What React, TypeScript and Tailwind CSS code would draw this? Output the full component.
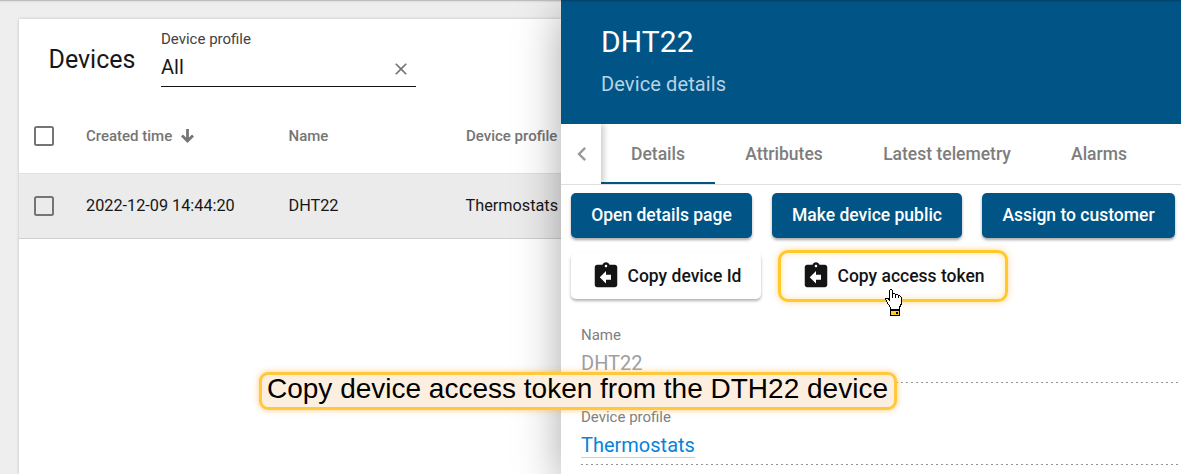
import type { ReactNode } from "react";
import { MdAssignmentReturn, MdChevronLeft, MdClose } from "react-icons/md";

const roboto = "font-['Roboto',sans-serif]";

function Checkbox() {
  return <span className="block size-5 rounded-[2.5px] border-2 border-[#757575]" />;
}

function SortArrow() {
  return (
    <svg width="13" height="14" viewBox="0 0 13 14" fill="none" stroke="#757575" strokeWidth="2.8">
      <path d="M6.5 0V12M1 6.6L6.5 12L12 6.6" />
    </svg>
  );
}

function PrimaryButton({ children, className }: { children: ReactNode; className: string }) {
  return (
    <button
      className={`flex h-[45px] shrink-0 items-center justify-center rounded-[5px] bg-[#005586] pb-px text-[17.5px] font-medium whitespace-nowrap text-white shadow-[0_2px_3px_rgba(0,0,0,0.35)] ${className}`}
    >
      {children}
    </button>
  );
}

function Tab({ children, className, active }: { children: ReactNode; className: string; active?: boolean }) {
  return (
    <div
      className={`flex h-[60px] shrink-0 items-center justify-center border-b-2 pt-[2px] text-[17.5px] font-medium whitespace-nowrap text-[#7d7d7d] ${active ? "border-[#005586]" : "border-transparent"} ${className}`}
    >
      {children}
    </div>
  );
}

function DevicesTable() {
  return (
    <main className="w-[561px] shrink-0 pt-[19px] pl-[19px]">
      <section className="h-[455px] bg-white shadow-[0_0_3px_rgba(0,0,0,0.2)]">
        <div className="flex h-20 pl-[30px]">
          <h1 className="-ml-[0.5px] w-[112.5px] pt-[26px] text-[25px] leading-[30px] text-[#171717]">Devices</h1>
          <div className="h-[68px] w-[255px] border-b border-[#141414] pt-[10px]">
            <div className="text-[15px] leading-5 text-[#424242]">Device profile</div>
            <div className="flex h-[34px] items-center justify-between pt-1 text-[20px] text-[#171717]">
              <span className="pb-[2px]">All</span>
              <MdClose className="mt-[2px] mr-[5px] size-5 text-[#757575]" />
            </div>
          </div>
        </div>
        <div className="flex h-[75px] items-center border-b border-[#e0e0e0] pl-[15px] text-[15px] font-medium text-[#757575]">
          <div className="w-[52px]"><Checkbox /></div>
          <div className="flex w-[202.5px] items-center gap-[9px]">
            <span className="pt-px">Created time</span>
            <SortArrow />
          </div>
          <div className="w-[177.5px] pt-px">Name</div>
          <div className="pt-px whitespace-nowrap">Device profile</div>
        </div>
        <div className="flex h-[65px] items-center border-b border-[#cfcfcf] bg-[#ebebeb] pl-[15px] text-[16.25px] text-[#171717]">
          <div className="w-[52px]"><Checkbox /></div>
          <div className="w-[202.5px]">2022-12-09 14:44:20</div>
          <div className="w-[177px]">DHT22</div>
          <div>Thermostats</div>
        </div>
      </section>
    </main>
  );
}

function DeviceDetails() {
  return (
    <aside className="relative h-[474px] w-[620px] bg-white shadow-[0_10px_42px_rgba(0,0,0,0.34)]">
      <header className="h-[124px] bg-[#005586] pt-6 pl-10">
        <h2 className="text-[30px] leading-9 tracking-[0.1px] text-white">DHT22</h2>
        <p className="pt-3 text-[20px] leading-6 tracking-[0.12px] text-[#b8d3e3]">Device details</p>
      </header>
      <nav className="flex h-[61px] border-b border-[#dfdfdf]">
        <div className="flex w-10 shrink-0 items-center justify-center pl-[2px] shadow-[3px_0_6px_rgba(0,0,0,0.2)] [clip-path:inset(0_-15px_0_0)]">
          <MdChevronLeft className="size-7 text-[#999]" />
        </div>
        <Tab active className="w-[114px]">Details</Tab>
        <Tab className="w-[138px]">Attributes</Tab>
        <Tab className="w-[188px]">Latest telemetry</Tab>
        <Tab className="w-[116px]">Alarms</Tab>
      </nav>
      <div className="flex gap-5 pt-2 pl-[10px]">
        <PrimaryButton className="w-[181px]">Open details page</PrimaryButton>
        <PrimaryButton className="w-[190px]">Make device public</PrimaryButton>
        <PrimaryButton className="w-[193px]">Assign to customer</PrimaryButton>
      </div>
      <div className="flex items-center gap-[17px] pt-3 pl-[10px] text-[17.5px] font-medium text-[#141414]">
        <button className="flex h-[46px] w-[190px] items-center gap-[6.5px] rounded-[5px] pl-5 whitespace-nowrap shadow-[0_2px_3px_rgba(0,0,0,0.3)]">
          <MdAssignmentReturn className="size-[30px]" />
          Copy device Id
        </button>
        <button className="flex h-[52px] w-[230px] items-center gap-[6.5px] rounded-[10px] border-[3px] border-[#ffc928] pl-5 whitespace-nowrap shadow-[0_0_6px_rgba(255,167,38,0.5),inset_0_0_6px_rgba(255,167,38,0.35)]">
          <MdAssignmentReturn className="size-[30px]" />
          Copy access token
        </button>
      </div>
      <div className="pt-[23px] pl-5">
        <div className="h-[57px] w-[597px]">
          <div className="text-[15px] leading-5 text-[#808080]">Name</div>
          <div className="pt-[6px] text-[20px] leading-6 text-[#9e9e9e]">DHT22</div>
        </div>
        <DottedLine />
        <div className="h-[81px] w-[597px] pt-6">
          <div className="text-[15px] leading-5 text-[#808080]">Device profile</div>
          <div className="mt-[6px] h-[25px] w-[114px] border-b border-[#c2cfe8] text-[20px] leading-6 text-[#0584d8]">Thermostats</div>
        </div>
        <DottedLine />
      </div>
    </aside>
  );
}

function DottedLine() {
  return <div className="h-px w-[597px] bg-[repeating-linear-gradient(90deg,#949494_0_2px,transparent_2px_5px)]" />;
}

function Pointer() {
  return (
    <svg className="absolute top-[288px] left-[885px]" width="18" height="28" viewBox="0 0 18 28" shapeRendering="crispEdges" stroke="#000">
      <path fill="#fff" d="M5.5 21.5V19.5L3.5 16.5L1.5 13.5L.5 10.5H3.5L4.5 12.5V2.5L5.5 1.5H6.5L7.5 2.5V5.5H9.5L10.5 6.5H12.5L13.5 7.5H14.5L16.5 9.5V15.5L14.5 19.5V21.5Z" />
      <path fill="none" d="M7.5 5V10M10.5 6V10M13.5 7V10" />
      <path fill="#ffc928" d="M5.5 22.5H14.5V27.5H5.5Z" />
      <rect x="11" y="24" width="2" height="2" fill="#000" stroke="none" />
    </svg>
  );
}

export default function App() {
  return (
    <div className={`relative flex h-[474px] w-[1181px] overflow-hidden bg-[#eee] ${roboto}`}>
      <DevicesTable />
      <DeviceDetails />
      <div className="absolute inset-x-0 top-0 h-px bg-black/20 shadow-[0_0_2px_rgba(0,0,0,0.3)]" />
      <Pointer />
      <div className="absolute top-[372px] left-[259px] h-[38px] w-[638px] rounded-[9px] border-[3px] border-[#ffc83d] bg-[#fdefdf] pl-[5px] font-['Liberation_Sans',sans-serif] text-[28px] leading-[27px] whitespace-nowrap text-black shadow-[0_0_6px_rgba(255,167,38,0.6)]">
        Copy device access token from the DTH22 device
      </div>
    </div>
  );
}
